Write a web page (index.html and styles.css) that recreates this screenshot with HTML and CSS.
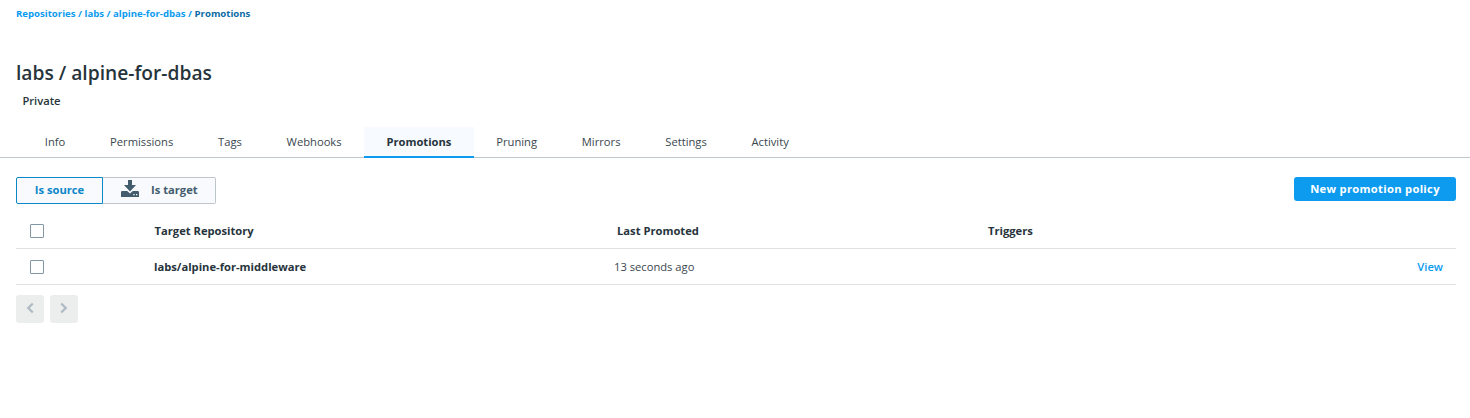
FILE: index.html
```html
<!DOCTYPE html>
<html lang="en">
<head>
<meta charset="utf-8">
<title>labs / alpine-for-dbas</title>
<link rel="stylesheet" href="styles.css">
</head>
<body>
<nav class="crumbs"><a>Repositories</a> / <a>labs</a> / <a>alpine-for-dbas</a> / <span class="current">Promotions</span></nav>
<h1 class="title">labs / alpine-for-dbas</h1>
<div class="visibility">Private</div>
<nav class="tabs">
<a class="tab">Info</a><a class="tab">Permissions</a><a class="tab">Tags</a><a class="tab">Webhooks</a><a class="tab active">Promotions</a><a class="tab">Pruning</a><a class="tab">Mirrors</a><a class="tab">Settings</a><a class="tab">Activity</a>
</nav>
<main class="content">
<div class="toolbar">
<div class="switch">
<button class="option selected">Is source</button>
<button class="option target"><svg class="download" viewBox="0 0 18 17" width="18" height="17"><path fill="currentColor" d="M7 0h4v5h4L9 11.400 3 5h4zM.8 11h5.400L9 13.400 11.800 11h5.400l.8.8V17H0v-5.200z"/><path fill="#f8fafd" d="M12.300 14h1.300v1.300h-1.300zM15 14h1.300v1.300H15z"/></svg>Is target</button>
</div>
<button class="primary">New promotion policy</button>
</div>
<div class="table">
<div class="row head"><span class="box"></span><span class="repo">Target Repository</span><span class="when">Last Promoted</span><span class="triggers">Triggers</span></div>
<div class="row"><span class="box"></span><span class="repo name">labs/alpine-for-middleware</span><span class="when ago">13 seconds ago</span><span class="triggers"></span><a class="view">View</a></div>
</div>
<div class="pager">
<button class="page"><svg width="8" height="12" viewBox="0 0 8 12"><path d="M6.800 1.500L2.300 6l4.500 4.500"/></svg></button>
<button class="page"><svg width="8" height="12" viewBox="0 0 8 12"><path d="M1.200 1.500L5.700 6l-4.500 4.500"/></svg></button>
</div>
</main>
</body>
</html>
```
FILE: styles.css
```css
* { box-sizing: border-box; }
body { margin: 0; background: #fff; color: #27343c; font: 11.2px/16px "Open Sans", sans-serif; }
button { font: inherit; margin: 0; }
.crumbs { height: 28px; padding: 6px 16px; font-size: 9.6px; font-weight: 700; color: #0c9bef; white-space: nowrap; }
.current { color: #0b6ba5; }
.title { margin: 32px 16px 0; font-size: 19.2px; line-height: 26px; font-weight: 600; }
.visibility { margin: 7px 0 0 22.4px; font-weight: 600; font-size: 11.2px; }
.tabs { display: flex; height: 49px; padding: 18px 0 0 22.4px; border-bottom: 1px solid #bdc7cc; }
.tab { height: 31px; padding: 7px 22.4px 0; white-space: nowrap; color: #3a474f; }
.active { color: #27343c; font-weight: 700; background: #f7faff; border-bottom: 2px solid #0c9bef; }
.content { padding: 19px 14px 0 16px; }
.toolbar { display: flex; justify-content: space-between; align-items: flex-start; height: 36px; }
.switch { display: flex; }
.option { height: 27px; width: 87px; padding: 0 0 2px; border: 1px solid #bfc6cb; background: #f8fafd; color: #445d6e; font-weight: 700; }
.selected { border-color: #0c87c8; color: #0c87c8; border-radius: 2px 0 0 2px; }
.target { display: flex; align-items: center; gap: 12px; width: 113px; padding-left: 18px; border-left: 0; border-radius: 0 2px 2px 0; }
.download { margin-top: -2px; }
.primary { width: 162px; height: 24px; padding: 0; border: 0; border-radius: 3px; background: #0c9bef; color: #fff; font-weight: 700; letter-spacing: .3px; }
.row { display: flex; align-items: center; height: 36px; padding: 0 13px 0 14px; border-bottom: 1px solid #dfe1e3; }
.box { width: 14px; height: 14px; border: 1px solid #8396a4; border-radius: 1px; }
.head { font-weight: 700; }
.repo { width: 463px; margin-left: 110px; }
.head .repo { padding-left: .5px; }
.name { font-weight: 700; }
.when { width: 371px; }
.ago { margin-left: -3px; width: 374px; color: #3a474f; }
.view { margin-left: auto; color: #0c9bef; font-weight: 600; }
.pager { display: flex; gap: 6px; padding-top: 10px; }
.page { display: grid; place-items: center; width: 28px; height: 28px; padding: 0 0 2px; border: 0; border-radius: 3px; background: #eceeee; }
.page path { fill: none; stroke: #b0bac2; stroke-width: 2.3; }
```
